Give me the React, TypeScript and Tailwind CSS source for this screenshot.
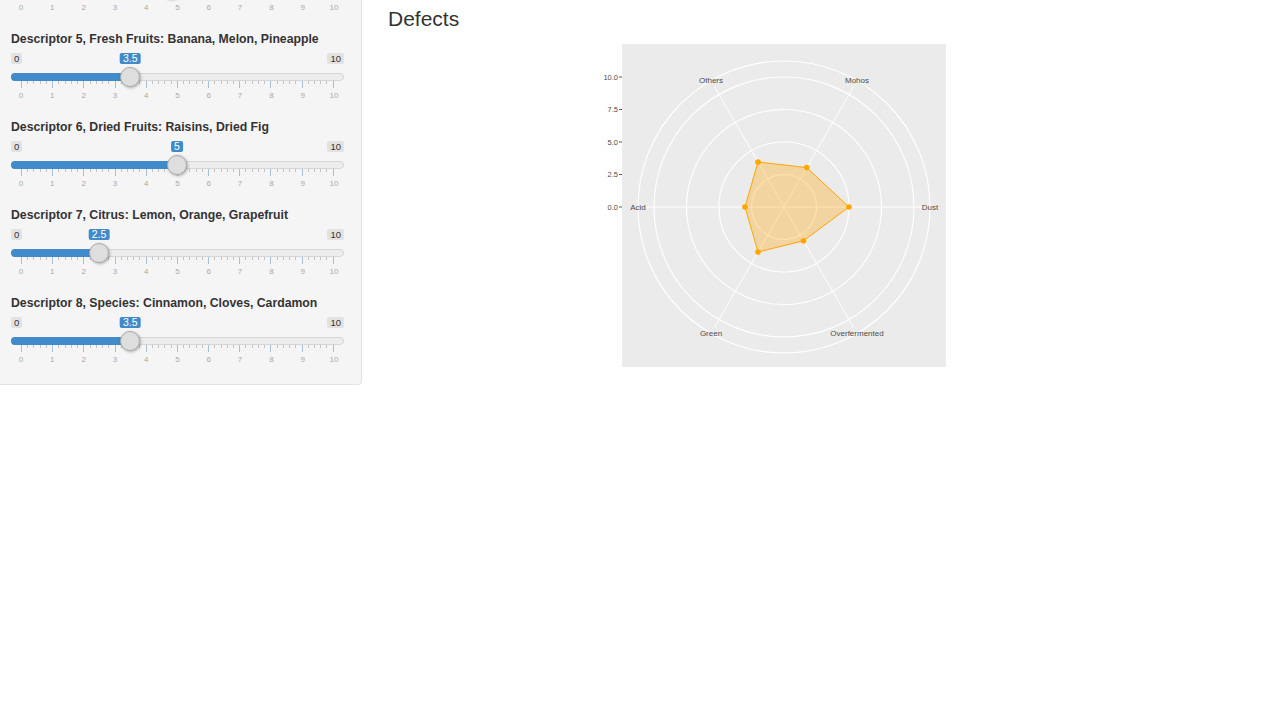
import React from 'react';

const font = { fontFamily: '"Liberation Sans", Arial, sans-serif' };

const descriptors = [
  { label: 'Descriptor 5, Fresh Fruits: Banana, Melon, Pineapple', value: 3.5 },
  { label: 'Descriptor 6, Dried Fruits: Raisins, Dried Fig', value: 5 },
  { label: 'Descriptor 7, Citrus: Lemon, Orange, Grapefruit', value: 2.5 },
  { label: 'Descriptor 8, Species: Cinnamon, Cloves, Cardamon', value: 3.5 },
];

const STEP = 31.2;
const nums = Array.from({ length: 11 }, (_, i) => i);

function TickLabels() {
  return (
    <div className="mx-[10px] flex justify-between text-[8px] leading-[10px] text-[#aaa]">
      {nums.map((n) => (
        <div key={n} className="w-0 flex justify-center">
          <span>{n}</span>
        </div>
      ))}
    </div>
  );
}

function Slider({ label, value }: { label: string; value: number }) {
  const ticks = Array.from({ length: 51 }, (_, i) => i);
  return (
    <div className="h-[88px] pt-px">
      <div className="text-[12.25px] font-bold leading-[14px] text-[#333]">{label}</div>
      {/* min / value / max */}
      <div className="relative mt-[7px] h-[11px] flex justify-between text-[9.5px] leading-[11px] text-[#333]">
        <span className="bg-[#e2e2e2] rounded-[2px] px-[3px]">0</span>
        <span
          className="absolute top-0 -translate-x-1/2 bg-[#428bca] text-white rounded-[2px] px-[3px] text-[10.5px] leading-[11px]"
          style={{ left: 10 + value * STEP }}
        >
          {value}
        </span>
        <span className="bg-[#e2e2e2] rounded-[2px] px-[3px]">10</span>
      </div>
      {/* track */}
      <div className="relative mt-[3px] h-[20px]">
        <div className="absolute left-0 right-0 top-[6px] h-[8px] rounded-full bg-[#ededed] border border-[#d6d6d6]" />
        <div
          className="absolute left-0 top-[6px] h-[8px] rounded-l-full bg-[#428bca]"
          style={{ width: 10 + value * STEP }}
        />
        <div className="absolute left-[10px] right-[10px] top-[14px] h-[7px] flex justify-between items-start">
          {ticks.map((i) => (
            <div
              key={i}
              className={i % 5 === 0 ? 'w-px h-[7px] bg-[#a9bfd6]' : 'w-px h-[3px] bg-[#c4c4c4]'}
            />
          ))}
        </div>
        <div
          className="absolute top-0 w-[20px] h-[20px] rounded-full bg-[#dedede] border border-[#ababab] shadow-[1px_1px_3px_rgba(0,0,0,0.3)]"
          style={{ left: value * STEP }}
        />
      </div>
      <div className="mt-[4px]">
        <TickLabels />
      </div>
    </div>
  );
}

function Radar() {
  const cx = 204;
  const cy = 167;
  const u = 13;
  const axes = [
    { name: 'Dust', v: 5 },
    { name: 'Mohos', v: 3.5 },
    { name: 'Others', v: 4 },
    { name: 'Acid', v: 3 },
    { name: 'Green', v: 4 },
    { name: 'Overfermented', v: 3 },
  ];
  const pt = (r: number, i: number) => {
    const a = (i * Math.PI) / 3;
    return [cx + r * Math.cos(a), cy - r * Math.sin(a)];
  };
  const poly = axes.map((a, i) => pt(a.v * u, i).join(',')).join(' ');
  return (
    <svg width="380" height="332" viewBox="0 0 380 332" style={font}>
      <rect x="42" y="4" width="324" height="323" fill="#ebebeb" />
      {[32.5, 65, 97.5, 130, 146].map((r) => (
        <circle key={r} cx={cx} cy={cy} r={r} fill="none" stroke="#fff" strokeWidth="1.1" />
      ))}
      {axes.map((a, i) => {
        const [x, y] = pt(i % 3 === 0 ? 138 : 139, i);
        return <line key={a.name} x1={cx} y1={cy} x2={x} y2={y} stroke="#fff" strokeWidth="1" />;
      })}
      {[0, 2.5, 5, 7.5, 10].map((v) => (
        <g key={v}>
          <text x="38" y={cy - v * u} fontSize="7.5" fill="#4d4d4d" textAnchor="end" dominantBaseline="central">
            {v.toFixed(1)}
          </text>
          <line x1="39" x2="42" y1={cy - v * u} y2={cy - v * u} stroke="#333" strokeWidth="0.8" />
        </g>
      ))}
      <polygon points={poly} fill="#FFA500" fillOpacity="0.32" stroke="#FFA500" strokeWidth="1" />
      {axes.map((a, i) => {
        const [x, y] = pt(a.v * u, i);
        return <circle key={a.name} cx={x} cy={y} r="2.8" fill="#FFA500" />;
      })}
      {axes.map((a, i) => {
        const [x, y] = pt(146, i);
        return (
          <text key={a.name} x={x} y={y} fontSize="8" fill="#4d4d4d" textAnchor="middle" dominantBaseline="central">
            {a.name}
          </text>
        );
      })}
    </svg>
  );
}

export default function App() {
  return (
    <div className="w-[1280px] h-[720px] overflow-hidden bg-white flex items-start" style={font}>
      {/* Sidebar (scrolled: only the tick labels of the previous slider show) */}
      <aside className="w-[362px] shrink-0 pl-[11px] pr-[17px] pb-px bg-[#f5f5f5] border-r border-b border-[#e3e3e3] rounded-br-[4px]">
        <div className="relative h-[31px] pt-[3px]">
          <div className="absolute left-[150px] -top-[21px] w-[20px] h-[20px] rounded-full bg-[#dedede] border border-[#ababab] shadow-[1px_1px_3px_rgba(0,0,0,0.3)]" />
          <TickLabels />
        </div>
        {descriptors.map((d) => (
          <Slider key={d.label} label={d.label} value={d.value} />
        ))}
      </aside>

      {/* Main */}
      <main className="flex-1 pl-[26px] pt-[7px]">
        <h3 className="text-[21px] leading-[24px] text-[#333]">Defects</h3>
        <div className="mt-[9px] ml-[192px]">
          <Radar />
        </div>
      </main>
    </div>
  );
}
